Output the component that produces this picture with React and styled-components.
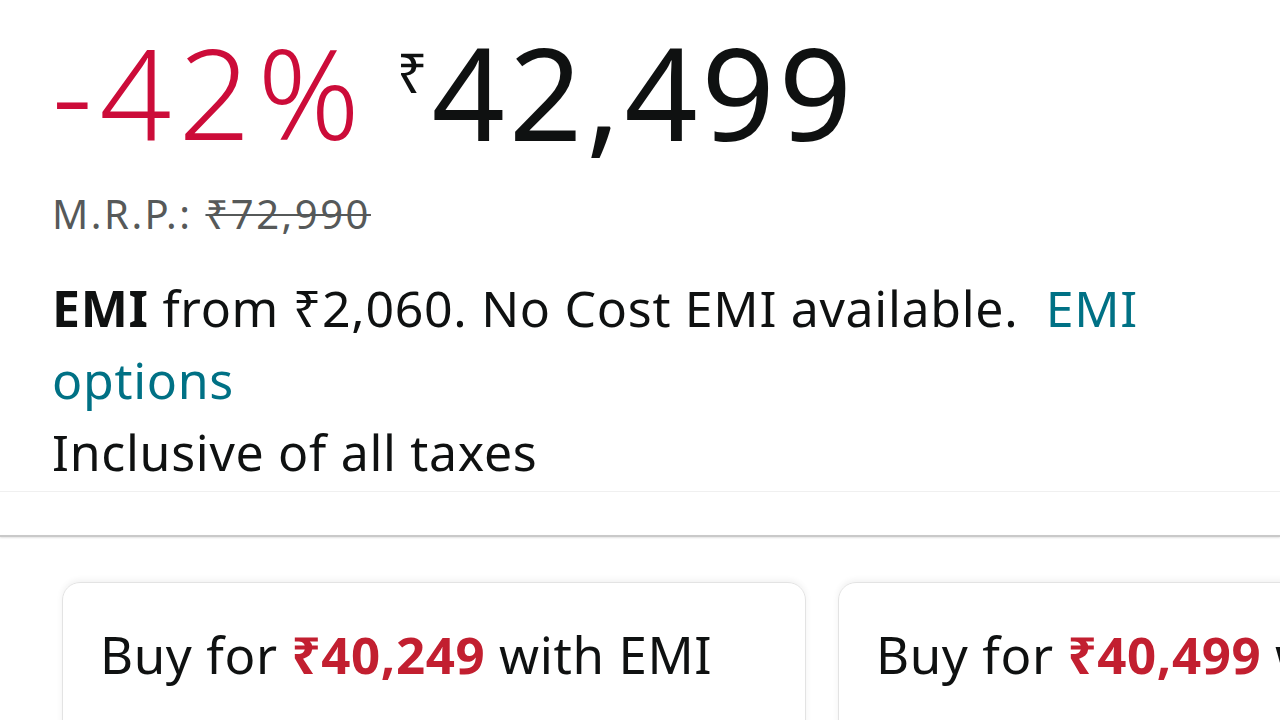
import React from "react";
import styled, { createGlobalStyle } from "styled-components";

const GlobalStyle = createGlobalStyle`
  html, body {
    margin: 0;
    padding: 0;
    background: #ffffff;
    font-family: "Noto Sans", "Open Sans", sans-serif;
    color: #0f1111;
    overflow: hidden;
  }
`;

const Page = styled.div`
  width: 1280px;
  height: 720px;
  overflow: hidden;
  background: #fff;
`;

const PriceBlock = styled.div`
  padding: 0 40px 0 52px;
`;

const PriceRow = styled.div`
  display: flex;
  align-items: flex-start;
  height: 176px;
  padding-top: 28px;
  box-sizing: border-box;
  white-space: nowrap;
`;

const Discount = styled.span`
  font-size: 126px;
  font-weight: 300;
  color: #cc0c39;
  line-height: 1;
  letter-spacing: 7px;
`;

const Symbol = styled.span`
  font-size: 54px;
  line-height: 1;
  margin: 17px 4px 0 30px;
`;

const Price = styled.span`
  font-size: 128px;
  font-weight: 400;
  line-height: 1;
  letter-spacing: 4px;
`;

const Mrp = styled.div`
  font-size: 40px;
  color: #565959;
  line-height: 1;
  letter-spacing: 2.5px;
  margin-top: 18px;
  margin-bottom: 38px;

  s {
    text-decoration-thickness: 2px;
  }
`;

const Emi = styled.p`
  margin: 0 0 3px;
  font-size: 50px;
  line-height: 72px;
  letter-spacing: 0.7px;
  width: 1140px;

  b {
    font-weight: 700;
  }
`;

const Link = styled.span`
  color: #007185;
`;

const Thin = styled.div`
  height: 1px;
  background: #f0f0f0;
`;

const Thick = styled.div`
  height: 2px;
  background: #c9c9c9;
  margin-top: 43px;
  box-shadow: 0 1px 2px rgba(0, 0, 0, 0.12);
`;

const Cards = styled.div`
  display: flex;
  gap: 32px;
  padding: 45px 0 0 62px;
`;

const Card = styled.div`
  flex: 0 0 auto;
  width: 744px;
  height: 200px;
  box-sizing: border-box;
  border: 1px solid #e3e3e3;
  border-radius: 18px;
  box-shadow: 0 -2px 6px rgba(0, 0, 0, 0.06);
  padding: 36px 0 0 37px;
  font-size: 51px;
  letter-spacing: 0.6px;
  white-space: nowrap;
`;

const Red = styled.b`
  color: #c21f30;
  font-weight: 700;
`;

export default function App() {
  return (
    <Page>
      <GlobalStyle />
      <PriceBlock>
        <PriceRow>
          <Discount>-42%</Discount>
          <Symbol>₹</Symbol>
          <Price>42,499</Price>
        </PriceRow>
        <Mrp>
          M.R.P.: <s>₹72,990</s>
        </Mrp>
        <Emi>
          <b>EMI</b> from ₹2,060. No Cost EMI available.&nbsp;{" "}
          <Link>EMI options</Link>
          <br />
          Inclusive of all taxes
        </Emi>
      </PriceBlock>
      <Thin />
      <Thick />
      <Cards>
        <Card>
          Buy for <Red>₹40,249</Red> with EMI
        </Card>
        <Card>
          Buy for <Red>₹40,499</Red> without EMI
        </Card>
      </Cards>
    </Page>
  );
}
